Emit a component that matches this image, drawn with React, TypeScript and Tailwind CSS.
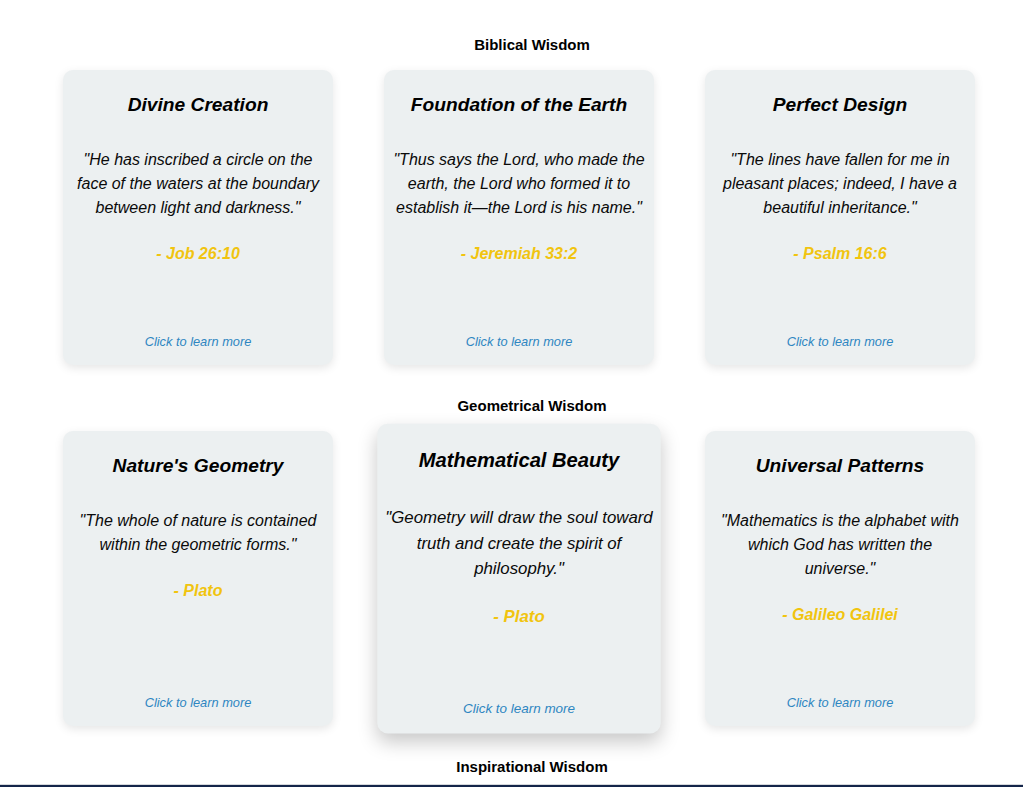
const sections = [
  {
    title: "Biblical Wisdom",
    cards: [
      {
        title: "Divine Creation",
        quote: "\"He has inscribed a circle on the face of the waters at the boundary between light and darkness.\"",
        source: "- Job 26:10",
      },
      {
        title: "Foundation of the Earth",
        quote: "\"Thus says the Lord, who made the earth, the Lord who formed it to establish it\u2014the Lord is his name.\"",
        source: "- Jeremiah 33:2",
      },
      {
        title: "Perfect Design",
        quote: "\"The lines have fallen for me in pleasant places; indeed, I have a beautiful inheritance.\"",
        source: "- Psalm 16:6",
      },
    ],
  },
  {
    title: "Geometrical Wisdom",
    cards: [
      {
        title: "Nature's Geometry",
        quote: "\"The whole of nature is contained within the geometric forms.\"",
        source: "- Plato",
      },
      {
        title: "Mathematical Beauty",
        quote: "\"Geometry will draw the soul toward truth and create the spirit of philosophy.\"",
        source: "- Plato",
        hovered: true,
      },
      {
        title: "Universal Patterns",
        quote: "\"Mathematics is the alphabet with which God has written the universe.\"",
        source: "- Galileo Galilei",
      },
    ],
  },
];

type Card = { title: string; quote: string; source: string; hovered?: boolean };

function WisdomCard({ card }: { card: Card }) {
  return (
    <div
      className={`flex flex-col w-[270px] h-[295px] shrink-0 px-[6px] pt-[21px] pb-[15px] rounded-[10px] bg-[#ecf0f1] text-center italic transition-transform ${
        card.hovered
          ? "scale-[1.05] shadow-[0_8px_18px_rgba(0,0,0,0.22)]"
          : "shadow-[0_3px_10px_rgba(0,0,0,0.10)]"
      }`}
    >
      <h3 className="text-[19.2px] leading-[28px] font-bold text-black mb-[29px]">{card.title}</h3>
      <p className="text-[16px] leading-[24px] text-[#0a0a0a]">{card.quote}</p>
      <p className="mt-[22px] text-[16px] leading-[24px] font-bold text-[#f1c40f]">{card.source}</p>
      <p className="mt-auto text-[12.8px] leading-[16px] text-[#2e86c1]">Click to learn more</p>
    </div>
  );
}

export default function App() {
  return (
    <div className="min-h-[787px] bg-white font-['Liberation_Sans',Arial,sans-serif] flex flex-col">
      <main className="flex-1 pt-[35px]">
        {sections.map((section) => (
          <section key={section.title} className="mb-[31px]">
            <h2 className="pl-[41px] text-center text-[15px] leading-[20px] font-bold text-black mb-[15px]">
              {section.title}
            </h2>
            <div className="flex justify-center gap-[51px] pl-[15px]">
              {section.cards.map((card) => (
                <WisdomCard key={card.title} card={card} />
              ))}
            </div>
          </section>
        ))}
        <h2 className="pl-[41px] text-center text-[15px] leading-[20px] font-bold text-black">
          Inspirational Wisdom
        </h2>
      </main>
      <footer className="h-[3px] border-t border-[#d5d8dc] bg-[#14254a]" />
    </div>
  );
}
